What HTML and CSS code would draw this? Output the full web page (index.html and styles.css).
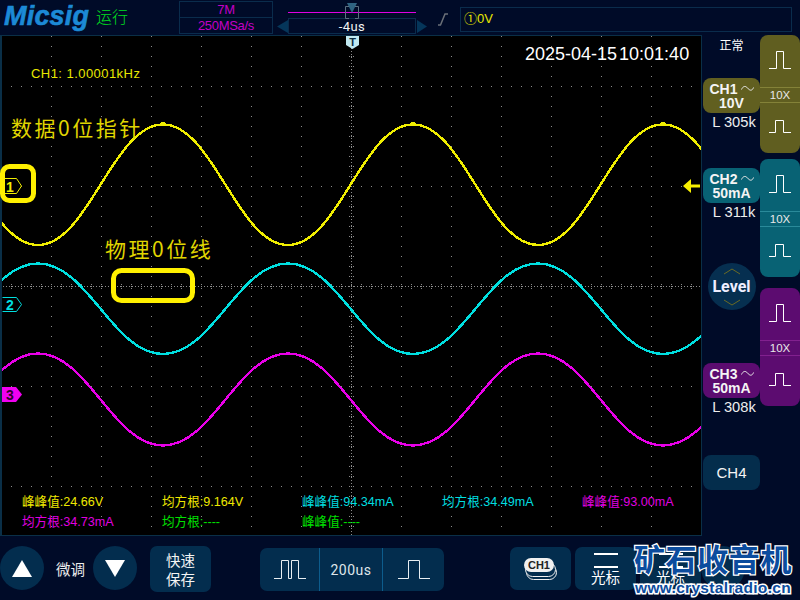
FILE: index.html
```html
<!DOCTYPE html>
<html lang="zh">
<head>
<meta charset="utf-8">
<title>Micsig</title>
<link rel="stylesheet" href="styles.css">
</head>
<body>
<div class="app">
  <header class="top">
    <div class="logo">Micsig</div>
    <div class="run">运行</div>
    <div class="rate">
      <div class="rate-cell">7M</div>
      <div class="rate-cell">250MSa/s</div>
    </div>
    <svg class="tri tri-l" width="11" height="13" viewBox="0 0 11 13"><path class="tri-fill" d="M11 0V13L0 6.500Z"/></svg>
    <div class="time">
      <div class="rail">
        <svg class="rail-mark" width="14" height="17" viewBox="0 0 14 17">
          <path class="mark-tri" d="M2 1H12L7 11Z"/>
          <path class="mark-br" d="M4 4.500H.5V16.500H4M10 4.500H13.500V16.500H10"/>
        </svg>
      </div>
      <div class="time-box">-4us</div>
    </div>
    <svg class="tri tri-r" width="10" height="13" viewBox="0 0 10 13"><path class="tri-fill" d="M0 0V13L10 6.500Z"/></svg>
    <svg class="slope" width="12" height="13" viewBox="0 0 12 13"><path d="M1 12H3.500L8 1H11"/></svg>
    <div class="trig">①0V</div>
  </header>

  <main class="mid">
    <section class="screen">
      <svg class="scope" width="699" height="499" viewBox="2 36 699 499">
        <defs>
          <clipPath id="plot"><rect x="2" y="36" width="699" height="499"/></clipPath>
          <pattern id="cols" x="51" y="46" width="50" height="10" patternUnits="userSpaceOnUse"><rect class="dot" width="1" height="1"/></pattern>
          <pattern id="rows" x="11" y="86" width="10" height="100" patternUnits="userSpaceOnUse"><rect class="dot" width="1" height="1"/></pattern>
          <pattern id="vcenter" x="351" y="36" width="1" height="3" patternUnits="userSpaceOnUse"><rect class="dot" width="1" height="1"/></pattern>
          <pattern id="hcenter" x="0" y="286" width="3" height="1" patternUnits="userSpaceOnUse"><rect class="dot" width="1" height="1"/></pattern>
          <pattern id="vticks" x="349" y="46" width="5" height="10" patternUnits="userSpaceOnUse"><rect class="dot" width="1" height="1"/><rect class="dot" x="4" width="1" height="1"/></pattern>
          <pattern id="hticks" x="11" y="284" width="10" height="5" patternUnits="userSpaceOnUse"><rect class="dot" width="1" height="1"/><rect class="dot" y="4" width="1" height="1"/></pattern>
        </defs>
        <rect x="2" y="36" width="699" height="499" fill="url(#cols)"/>
        <rect x="2" y="36" width="699" height="499" fill="url(#rows)"/>
        <rect x="351" y="36" width="1" height="499" fill="url(#vcenter)"/>
        <rect x="2" y="286" width="699" height="1" fill="url(#hcenter)"/>
        <rect x="349" y="36" width="5" height="499" fill="url(#vticks)"/>
        <rect x="2" y="284" width="699" height="5" fill="url(#hticks)"/>

        <g clip-path="url(#plot)">
          <path class="wave wave-y" d="M-87 124.500C-37 124.500 -12 245 38 245S113 124.500 163 124.500S238 245 288 245S363 124.500 413 124.500S488 245 538 245S613 124.500 663 124.500S738 245 788 245"/>
          <path class="wave wave-c" d="M-87 354C-37 354 -12 263.500 38 263.500S113 354 163 354S238 263.500 288 263.500S363 354 413 354S488 263.500 538 263.500S613 354 663 354S738 263.500 788 263.500"/>
          <path class="wave wave-m" d="M-87 445.500C-37 445.500 -12 353.500 38 353.500S113 445.500 163 445.500S238 353.500 288 353.500S363 445.500 413 445.500S488 353.500 538 353.500S613 445.500 663 445.500S738 353.500 788 353.500"/>
        </g>
        <rect class="notch" x="161" y="122" width="4" height="2"/>
        <rect class="notch" x="411" y="122" width="4" height="2"/>
        <rect class="notch" x="661" y="122" width="4" height="2"/>

        <path class="trace-y-m" d="M2.500 178.500H16.500L21.500 186L16.500 193.500H2.500"/>
        <text class="mk mk-y" x="6" y="192">1</text>
        <path class="trace-c-m" d="M2.500 297.500H16.500L21.500 304.500L16.500 311.500H2.500"/>
        <text class="mk mk-c" x="6" y="310">2</text>
        <path class="mk-m-bg" d="M2 387H16L22 394.500L16 402H2Z"/>
        <text class="mk mk-m" x="6" y="400">3</text>

        <path class="t-flag" d="M346 36H359V45L352.500 49L346 45Z"/>
        <text class="t-text" x="352.500" y="46">T</text>
        <path class="arrow" d="M683 186L691 179V184.500H700V187.500H691V193Z"/>

        <rect class="hl" x="2.500" y="166.500" width="31" height="34" rx="7"/>
        <rect class="hl" x="113.500" y="270.500" width="79" height="30" rx="8"/>
      </svg>

      <div class="stamp">2025-04-15 10:01:40</div>
      <div class="freq">CH1: 1.00001kHz</div>
      <div class="note note-a">数据0位指针</div>
      <div class="note note-b">物理0位线</div>

      <div class="meas">
        <div class="m-y">峰峰值:24.66V</div>
        <div class="m-y">均方根:9.164V</div>
        <div class="m-c">峰峰值:94.34mA</div>
        <div class="m-c">均方根:34.49mA</div>
        <div class="m-m">峰峰值:93.00mA</div>
        <div class="m-m">均方根:34.73mA</div>
        <div class="m-g">均方根:----</div>
        <div class="m-g">峰峰值:----</div>
      </div>
    </section>

    <aside class="side">
      <div class="side-l">
        <div class="status">正常</div>
        <div class="chan chan-1">
          <div class="pill pill-1"><span class="pill-top">CH1<svg class="ac" width="13" height="7" viewBox="0 0 13 7"><path d="M.5 4.500C2 1 4.500 .5 6.500 3S11 6.500 12.500 2.500"/></svg></span><span>10V</span></div>
          <div class="load">L 305k</div>
        </div>
        <div class="chan chan-2">
          <div class="pill pill-2"><span class="pill-top">CH2<svg class="ac" width="13" height="7" viewBox="0 0 13 7"><path d="M.5 4.500C2 1 4.500 .5 6.500 3S11 6.500 12.500 2.500"/></svg></span><span>50mA</span></div>
          <div class="load">L 311k</div>
        </div>
        <div class="level">
          <svg class="chev" width="18" height="7" viewBox="0 0 18 7"><path d="M1 6L9 1L17 6"/></svg>
          <span class="level-text">Level</span>
          <svg class="chev" width="18" height="7" viewBox="0 0 18 7"><path d="M1 1L9 6L17 1"/></svg>
        </div>
        <div class="chan chan-3">
          <div class="pill pill-3"><span class="pill-top">CH3<svg class="ac" width="13" height="7" viewBox="0 0 13 7"><path d="M.5 4.500C2 1 4.500 .5 6.500 3S11 6.500 12.500 2.500"/></svg></span><span>50mA</span></div>
          <div class="load">L 308k</div>
        </div>
        <div class="pill pill-4">CH4</div>
      </div>
      <div class="side-r">
        <div class="probe probe-1">
          <svg class="pulse" width="22" height="18" viewBox="0 0 22 18"><path d="M0 17.500H7.500V.5H14.500V17.500H22"/></svg>
          <div class="x10">10X</div>
          <svg class="pulse-low" width="22" height="13" viewBox="0 0 22 13"><path d="M0 12.500H6.500V.5H14.500V12.500H22"/></svg>
        </div>
        <div class="probe probe-2">
          <svg class="pulse" width="22" height="18" viewBox="0 0 22 18"><path d="M0 17.500H7.500V.5H14.500V17.500H22"/></svg>
          <div class="x10">10X</div>
          <svg class="pulse-low" width="22" height="13" viewBox="0 0 22 13"><path d="M0 12.500H6.500V.5H14.500V12.500H22"/></svg>
        </div>
        <div class="probe probe-3">
          <svg class="pulse" width="22" height="18" viewBox="0 0 22 18"><path d="M0 17.500H7.500V.5H14.500V17.500H22"/></svg>
          <div class="x10">10X</div>
          <svg class="pulse-low" width="22" height="13" viewBox="0 0 22 13"><path d="M0 12.500H6.500V.5H14.500V12.500H22"/></svg>
        </div>
      </div>
    </aside>
  </main>

  <footer class="bottom">
    <div class="round"><svg width="20" height="17" viewBox="0 0 20 17"><path class="white-fill" d="M10 0L20 17H0Z"/></svg></div>
    <div class="fine">微调</div>
    <div class="round"><svg width="20" height="17" viewBox="0 0 20 17"><path class="white-fill" d="M10 17L20 0H0Z"/></svg></div>
    <div class="btn btn-save">快速<br>保存</div>
    <div class="seg">
      <div class="seg-cell seg-a"><svg class="seg-icon" width="32" height="19" viewBox="0 0 32 19"><path d="M0 18.500H7.500V.5H14.500V18.500H17.500V.5H24.500V18.500H32"/></svg></div>
      <div class="seg-cell seg-b">200us</div>
      <div class="seg-cell seg-c"><svg class="seg-icon" width="32" height="19" viewBox="0 0 32 19"><path d="M0 18.500H10.500V.5H21.500V18.500H32"/></svg></div>
    </div>
    <div class="btn btn-ch">
      <svg class="ch-stack" width="36" height="24" viewBox="0 0 36 24">
        <rect class="stack-line" x="3.500" y="7.500" width="30" height="14" rx="7"/>
        <rect class="stack-line stack-fill" x="2.500" y="4.500" width="30" height="14" rx="7"/>
        <rect class="stack-top" x="1" y="0" width="30" height="14" rx="7"/>
        <text class="stack-text" x="16" y="11">CH1</text>
      </svg>
    </div>
    <div class="btn btn-cur">
      <div class="cur-lines"></div>
      <div class="cur-text">光标</div>
    </div>
    <div class="btn btn-cur2">
      <div class="cur-lines"></div>
      <div class="cur-text">光标</div>
    </div>
    <div class="round round-last"></div>
    <div class="wm">
      <div class="wm-cn">矿石收音机</div>
      <div class="wm-en">www.crystalradio.cn</div>
    </div>
  </footer>
</div>
</body>
</html>
```
FILE: styles.css
```css
* { box-sizing: border-box; }
html, body { margin: 0; padding: 0; background: #000b28; }
body { font-family: "Liberation Sans", "Noto Sans CJK SC", sans-serif; overflow: hidden; }
.app { width: 800px; height: 600px; display: flex; flex-direction: column; background: #000b28; color: #fff; }

/* top bar */
.top { height: 35px; display: flex; align-items: flex-start; flex: none; }
.logo { width: 92px; margin-left: 4px; margin-top: 0; font: italic bold 27px/32px "Liberation Sans", sans-serif; color: #1c8ad6; -webkit-text-stroke: .6px #1c8ad6; letter-spacing: .2px; }
.run { width: 83px; font: 300 16px/32px "Noto Sans CJK SC", sans-serif; color: #00e020; }
.rate { width: 94px; height: 33px; margin-top: 1px; border: 1px solid #0a2c4c; display: flex; flex-direction: column; }
.rate-cell { height: 16px; flex: 1; text-align: center; color: #c400c4; font-size: 13px; line-height: 15px; letter-spacing: -.3px; }
.rate-cell + .rate-cell { border-top: 1px solid #0a2c4c; }
.tri { flex: none; margin-top: 20px; }
.tri-fill { fill: #05365a; }
.tri-l { margin-left: 4px; }
.time { width: 128px; height: 34px; position: relative; display: flex; flex-direction: column; }
.rail { height: 18px; position: relative; }
.rail::before { content: ""; display: block; height: 1px; background: #e000e0; position: relative; top: 12px; }
.rail-mark { position: absolute; left: 57px; top: 2px; }
.mark-tri { fill: #2f6482; }
.mark-br { fill: none; stroke: #5c7080; }
.time-box { height: 16px; border: 1px solid #0a2c4c; text-align: center; font: 13px/15px Roboto, sans-serif; color: #f2f2f2; letter-spacing: .4px; }
.tri-r { margin-left: 1px; }
.slope { flex: none; margin: 13px 0 0 10px; }
.slope path { fill: none; stroke: #6a7078; stroke-width: 1.5; }
.trig { margin: 7px 0 0 11px; width: 332px; height: 25px; border: 1px solid #0a2c4c; color: #e6e600; font: 13px/22px "Liberation Sans", "Noto Sans CJK SC", sans-serif; padding-left: 3px; }

/* middle */
.mid { height: 501px; display: flex; flex: none; }
.screen { width: 702px; height: 501px; flex: none; position: relative; background: #000; border: 1px solid #0a2f47; border-left-width: 2px; }
.scope { display: block; overflow: visible; }
.dot { fill: #8c8c8c; }
.wave { fill: none; stroke-width: 2.400; shape-rendering: crispEdges; }
.wave-y { stroke: #f0ee00; }
.wave-c { stroke: #00dfe0; }
.wave-m { stroke: #e800e8; }
.notch { fill: #f0ee00; }
.trace-y-m { fill: #000; stroke: #f0ee00; }
.trace-c-m { fill: #000; stroke: #00dfe0; }
.mk-m-bg { fill: #f000f0; }
.mk { font: bold 14px "Liberation Sans", sans-serif; }
.mk-y { fill: #f0ee00; }
.mk-c { fill: #00dfe0; }
.mk-m { fill: #300030; }
.t-flag { fill: #c0e8f0; }
.t-text { font: bold 11px "Liberation Sans", sans-serif; fill: #0a2c40; text-anchor: middle; }
.arrow { fill: #f8f000; }
.hl { fill: none; stroke: #fff000; stroke-width: 5; }

.stamp { position: absolute; left: 523px; top: 8px; font: 18px/20px "Liberation Sans", sans-serif; color: #fff; word-spacing: -3px; white-space: nowrap; }
.freq { position: absolute; left: 29px; top: 30px; font: 13px/15px "Liberation Sans", sans-serif; color: #e8e800; letter-spacing: .45px; white-space: nowrap; }
.note { position: absolute; font: 21px/26px "Noto Sans CJK SC", sans-serif; color: #e0d600; white-space: nowrap; letter-spacing: 2.500px; }
.note-a { left: 9px; top: 78px; }
.note-b { left: 103px; top: 199px; }
.meas { position: absolute; left: 20px; top: 457px; display: grid; grid-template-columns: repeat(5, 140px); grid-auto-rows: 20px; font-size: 12.600px; line-height: 19px; white-space: nowrap; }
.m-y { color: #efe800; }
.m-c { color: #00dfe0; }
.m-m { color: #e000e0; }
.m-g { color: #00e000; }

/* side */
.side { width: 98px; display: flex; }
.side-l { width: 58px; padding-left: 1px; display: flex; flex-direction: column; align-items: stretch; }
.status { height: 20px; font: 12px/20px "Noto Sans CJK SC", sans-serif; text-align: center; }
.chan-1 { margin-top: 23px; }
.chan-2 { margin-top: 37px; }
.chan-3 { margin-top: 53px; }
.pill { height: 35px; border-radius: 8px; display: flex; flex-direction: column; justify-content: center; align-items: center; font: bold 14px/14px "Liberation Sans", sans-serif; color: #f4f4f4; }
.pill-top { display: flex; align-items: center; gap: 3px; }
.ac { flex: none; }
.ac path { fill: none; stroke: #e8e8e8; }
.pill-1 { background: #615f20; }
.pill-2 { background: #086274; }
.pill-3 { background: #5c0c70; }
.pill-4 { background: #042d4c; margin-top: 39px; font: 15px/14px "Liberation Sans", sans-serif; }
.load { height: 18px; font: 14.700px/18px "Liberation Sans", sans-serif; text-align: center; color: #eee; padding-left: 5px; white-space: nowrap; }
.level { margin: 42px auto 0; width: 48px; height: 47px; border-radius: 50%; background: #062f50; display: flex; flex-direction: column; align-items: center; justify-content: center; gap: 1px; color: #eef; }
.level-text { font: bold 16px/22px Roboto, sans-serif; }
.chev path { fill: none; stroke: #6a6a24; stroke-width: 1; }

.side-r { width: 40px; display: flex; flex-direction: column; }
.probe { width: 40px; height: 118px; border-radius: 8px; display: flex; flex-direction: column; align-items: center; }
.probe-1 { background: #605e20; --line: #848238; }
.probe-2 { background: #086274; margin-top: 6px; --line: #2a8a9a; }
.probe-3 { background: #5c0c70; margin-top: 11px; --line: #82208f; }
.pulse { margin: 16px 0 18px; flex: none; }
.pulse-low { margin-top: 17px; flex: none; }
.pulse path, .pulse-low path { fill: none; stroke: #fff; }
.x10 { width: 40px; height: 16px; border-top: 1px solid var(--line); border-bottom: 1px solid var(--line); font: 11.500px/14px "Liberation Sans", sans-serif; text-align: center; color: #e8e8e8; }

/* bottom */
.bottom { height: 64px; flex: none; display: flex; align-items: flex-start; padding-top: 10px; position: relative; }
.round { width: 44px; height: 44px; border-radius: 50%; background: #032d4e; flex: none; display: flex; align-items: center; justify-content: center; }
.white-fill { fill: #fff; }
.fine { margin: 12px 8px 0 12px; font: 14.500px/22px "Noto Sans CJK SC", sans-serif; width: 29px; white-space: nowrap; color: #eee; }
.btn { background: #032d4e; border-radius: 7px; flex: none; width: 61px; }
.btn-save { margin-left: 13px; height: 46px; padding-top: 4px; font: 14.500px/19px "Noto Sans CJK SC", sans-serif; text-align: center; color: #f4f4f4; }
.seg { margin: 2px 0 0 49px; width: 184px; height: 43px; display: flex; background: #032d4e; border-radius: 7px; overflow: hidden; flex: none; }
.seg-cell { display: flex; align-items: center; justify-content: center; }
.seg-a { width: 60px; border-right: 1px solid #0d5c8c; }
.seg-b { width: 63px; border-right: 1px solid #0d5c8c; font: 14px/20px Roboto, sans-serif; color: #dfe6ea; letter-spacing: .5px; }
.seg-c { width: 61px; }
.seg-icon path { fill: none; stroke: #e8eef2; }
.btn-ch { margin: 1px 0 0 66px; height: 43px; display: flex; justify-content: center; padding-top: 11px; }
.ch-stack { overflow: visible; }
.stack-line { fill: none; stroke: #f0f0f0; }
.stack-fill { fill: #032d4e; }
.stack-top { fill: #f0f0f0; }
.stack-text { font: bold 11px "Liberation Sans", sans-serif; fill: #222; text-anchor: middle; }
.btn-cur { margin: 1px 0 0 4px; height: 43px; display: flex; flex-direction: column; align-items: center; }
.btn-cur2 { margin: 1px 0 0 4px; height: 43px; display: flex; flex-direction: column; align-items: center; }
.cur-lines { width: 24px; height: 15px; margin-top: 6px; border-top: 2px solid #fff; border-bottom: 2px solid #fff; }
.cur-text { font: 14.500px/20px "Noto Sans CJK SC", sans-serif; margin-top: -1px; }
.wm { position: absolute; left: 632px; top: 3px; width: 162px; text-align: center; }
.wm-cn { font: 700 31px/38px "Noto Sans CJK SC", sans-serif; color: #0b4c9e; -webkit-text-stroke: 2.500px #fff; paint-order: stroke fill; white-space: nowrap; letter-spacing: .6px; }
.wm-en { margin-top: 3px; font: bold 15.500px/16px "Liberation Sans", sans-serif; color: #0b4c9e; -webkit-text-stroke: 3px #fff; paint-order: stroke fill; white-space: nowrap; letter-spacing: .3px; }
```
